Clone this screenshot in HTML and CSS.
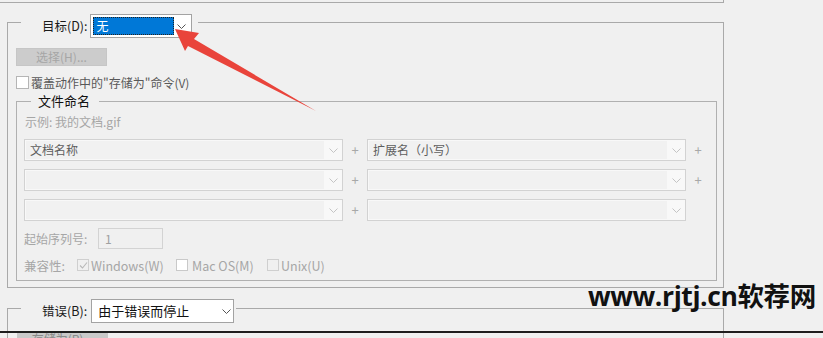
FILE: index.html
```html
<!DOCTYPE html>
<html lang="zh-CN">
<head>
<meta charset="utf-8">
<title>批处理</title>
<link rel="stylesheet" href="styles.css">
</head>
<body>
<div class="prev-box"></div>

<section class="group g-target">
  <div class="group-head">
    <div class="legend">
      <span class="lbl">目标(D):</span>
      <div class="combo combo-target">
        <span class="value">无</span>
        <span class="chev"><svg width="9" height="5" viewBox="0 0 9 5"><polyline points="0.5,0.5 4.5,4.5 8.5,0.5" fill="none" stroke="#555" stroke-width="1"/></svg></span>
      </div>
    </div>
  </div>

  <button class="btn-pick" disabled>选择(H)...</button>

  <div class="chk-row"><span class="cb"></span><span>覆盖动作中的"存储为"命令(V)</span></div>

  <section class="group g-name">
    <div class="group-head">
      <div class="legend">文件命名</div>
    </div>
    <div class="example">示例: 我的文档.gif</div>

    <div class="rows">
      <div class="row">
        <div class="combo-dis"><span class="value">文档名称</span><span class="chev"><svg width="9" height="5" viewBox="0 0 9 5"><polyline points="0.5,0.5 4.5,4.5 8.5,0.5" fill="none" stroke="#c4c4c4"/></svg></span></div>
        <span class="plus">+</span>
        <div class="combo-dis"><span class="value">扩展名（小写）</span><span class="chev"><svg width="9" height="5" viewBox="0 0 9 5"><polyline points="0.5,0.5 4.5,4.5 8.5,0.5" fill="none" stroke="#c4c4c4"/></svg></span></div>
        <span class="plus">+</span>
      </div>
      <div class="row">
        <div class="combo-dis"><span class="value"></span><span class="chev"><svg width="9" height="5" viewBox="0 0 9 5"><polyline points="0.5,0.5 4.5,4.5 8.5,0.5" fill="none" stroke="#c4c4c4"/></svg></span></div>
        <span class="plus">+</span>
        <div class="combo-dis"><span class="value"></span><span class="chev"><svg width="9" height="5" viewBox="0 0 9 5"><polyline points="0.5,0.5 4.5,4.5 8.5,0.5" fill="none" stroke="#c4c4c4"/></svg></span></div>
        <span class="plus">+</span>
      </div>
      <div class="row">
        <div class="combo-dis"><span class="value"></span><span class="chev"><svg width="9" height="5" viewBox="0 0 9 5"><polyline points="0.5,0.5 4.5,4.5 8.5,0.5" fill="none" stroke="#c4c4c4"/></svg></span></div>
        <span class="plus">+</span>
        <div class="combo-dis"><span class="value"></span><span class="chev"><svg width="9" height="5" viewBox="0 0 9 5"><polyline points="0.5,0.5 4.5,4.5 8.5,0.5" fill="none" stroke="#c4c4c4"/></svg></span></div>
      </div>
    </div>

    <div class="seq">
      <span class="seq-lbl">起始序列号:</span>
      <span class="seq-input">1</span>
    </div>

    <div class="compat">
      <span class="compat-lbl">兼容性:</span>
      <span class="cb-sm checked"><svg width="9" height="9" viewBox="0 0 9 9"><polyline points="1,4.5 3.5,7 8,1.5" fill="none" stroke="#b8b8b8" stroke-width="1.1"/></svg></span>
      <span class="os os-win">Windows(W)</span>
      <span class="cb-sm white"></span>
      <span class="os os-mac">Mac OS(M)</span>
      <span class="cb-sm"></span>
      <span class="os">Unix(U)</span>
    </div>
  </section>
</section>

<section class="group g-error">
  <div class="group-head">
    <div class="legend">
      <span class="lbl">错误(B):</span>
      <div class="combo combo-error">
        <span class="value">由于错误而停止</span>
        <span class="chev"><svg width="9" height="5" viewBox="0 0 9 5"><polyline points="0.5,0.5 4.5,4.5 8.5,0.5" fill="none" stroke="#555"/></svg></span>
      </div>
    </div>
  </div>
  <button class="btn-save" disabled>存储为(R)...</button>
</section>

<div class="edge"></div>
<div class="wm">www.rjtj.cn软荐网</div>
<svg class="arrow" width="823" height="338" viewBox="0 0 823 338">
  <polygon points="175,29 199,33 194,39 316,111 188,46 185,51" fill="#e9443b"/>
</svg>
</body>
</html>
```

FILE: styles.css
```css
* { box-sizing: border-box; }

body {
  margin: 0;
  width: 823px;
  height: 338px;
  overflow: hidden;
  position: relative;
  background: #f0f0f0;
  font-family: "Noto Sans CJK SC", sans-serif;
  font-size: 12px;
  color: #222;
}

.prev-box {
  width: 724px;
  height: 3px;
  border-right: 1px solid #a9a9a9;
  border-bottom: 1px solid #a9a9a9;
}

.group { border: 1px solid #a9a9a9; }

.group-head { display: flex; }

.legend {
  display: flex;
  align-items: center;
  background: #f0f0f0;
}

.lbl {
  color: #1b1b1b;
  line-height: 16px;
  font-size: 12.5px;
}

.combo {
  display: flex;
  align-items: center;
  height: 24px;
  border: 1px solid #a3a3a3;
  background: #fff;
}

.chev {
  flex: 1;
  display: flex;
  justify-content: center;
  align-items: center;
}
.chev svg { display: block; }

/* target group */
.g-target {
  margin: 19px 0 0 7px;
  width: 717px;
  height: 266px;
}
.g-target > .group-head { margin-top: -9px; height: 24px; }
.g-target > .group-head .legend { margin-left: 13px; padding: 0 6px 0 21px; }
.g-target > .group-head .lbl { margin-right: 2px; }

.combo-target { width: 102px; padding: 2px; }
.combo-target .value {
  flex: none;
  width: 81px;
  height: 18px;
  background: #0078d7;
  color: #fff;
  border: 1px dotted #222;
  padding-left: 3px;
  line-height: 16px;
}

.btn-pick {
  display: block;
  margin: 10px 0 0 8px;
  width: 91px;
  height: 18px;
  padding: 0;
  border: 1px solid #c6c6c6;
  background: #cccccc;
  color: #a6a6a6;
  font: inherit;
  line-height: 16px;
}

.chk-row {
  display: flex;
  align-items: center;
  margin: 10px 0 0 8px;
  height: 13px;
  line-height: 14px;
  color: #585858;
}
.cb {
  width: 13px;
  height: 13px;
  border: 1px solid #b5b5b5;
  background: #fff;
  margin-right: 2px;
}

/* file naming group */
.g-name {
  margin: 12px 0 0 8px;
  width: 701px;
  height: 180px;
  border-color: #b0b0b0;
}
.g-name > .group-head { margin-top: -9px; height: 16px; }
.g-name > .group-head .legend {
  margin-left: 14px;
  padding: 0 9px 0 7px;
  font-size: 13px;
  line-height: 16px;
  color: #111;
}

.example {
  margin: 6px 0 0 8px;
  line-height: 14px;
  color: #a6a6a6;
}

.rows {
  margin: 10px 0 0 7px;
  display: flex;
  flex-direction: column;
  gap: 8px;
}
.row { display: flex; align-items: center; height: 22px; }

.combo-dis {
  display: flex;
  width: 319px;
  height: 22px;
  border: 1px solid #d2d2d2;
  background: #f8f8f8;
}
.combo-dis .value {
  flex: none;
  width: 298px;
  margin: 1px 0 1px 1px;
  padding-left: 4px;
  background: #f1f1f1;
  color: #5e5e5e;
  line-height: 18px;
}

.plus {
  width: 24px;
  text-align: center;
  color: #a8a8a8;
  font-size: 13px;
  line-height: 16px;
}

.seq {
  display: flex;
  align-items: center;
  margin: 7px 0 0 7px;
  height: 21px;
  color: #a6a6a6;
}
.seq-lbl { width: 74px; }
.seq-input {
  width: 65px;
  height: 21px;
  border: 1px solid #d3d3d3;
  padding-left: 6px;
  line-height: 19px;
  color: #a0a0a0;
}

.compat {
  display: flex;
  align-items: center;
  margin: 9px 0 0 7px;
  height: 14px;
  color: #a6a6a6;
  font-size: 12.5px;
}
.compat-lbl { width: 53px; }
.cb-sm {
  width: 12px;
  height: 12px;
  border: 1px solid #cfcfcf;
  margin-right: 2px;
  display: flex;
  align-items: center;
  justify-content: center;
}
.cb-sm.white { background: #fff; border-color: #c9c9c9; }
.os-win { width: 85px; }
.os-mac { width: 75px; margin-left: 2px; }

/* error group */
.g-error {
  margin: 20px 0 0 7px;
  width: 717px;
  height: 30px;
  border-bottom: 0;
}
.g-error > .group-head { margin-top: -10px; height: 24px; }
.g-error > .group-head .legend { margin-left: 13px; padding: 0 2px 0 21px; }
.g-error > .group-head .lbl { margin-right: 4px; }
.combo-error { width: 143px; padding-left: 6px; }
.combo-error .value { flex: none; width: 122px; color: #111; line-height: 16px; font-size: 13px; }

.btn-save {
  display: block;
  margin: 8px 0 0 9px;
  width: 91px;
  height: 7px;
  padding: 0;
  border: 0;
  background: #c9c9c9;
  color: #8a8a8a;
  font: inherit;
  line-height: 16px;
  overflow: hidden;
  vertical-align: top;
}

.edge {
  position: absolute;
  left: 0;
  top: 331px;
  width: 823px;
  height: 2px;
  background: #1e1e1e;
}

.wm {
  position: absolute;
  left: 588px;
  top: 275px;
  font-family: "Open Sans", "Noto Sans CJK SC", sans-serif;
  font-weight: 700;
  font-size: 26.5px;
  letter-spacing: -0.4px;
  color: #111;
  white-space: nowrap;
}

.arrow {
  position: absolute;
  left: 0;
  top: 0;
  pointer-events: none;
}
```
